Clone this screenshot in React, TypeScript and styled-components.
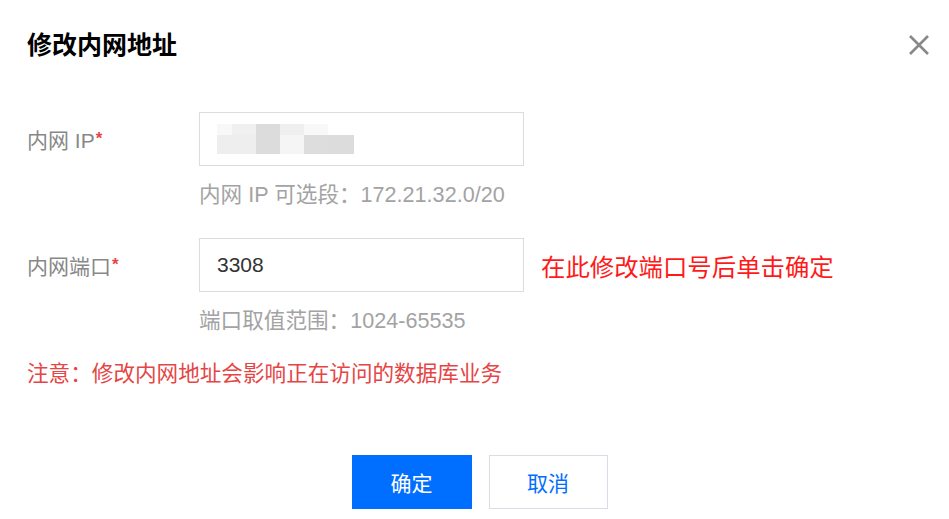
import * as React from "react"
import styled, { createGlobalStyle } from "styled-components"

const GlobalStyle = createGlobalStyle`
    html, body {
        margin: 0;
        padding: 0;
        background: #fff;
    }
    body {
        font-family: "Liberation Sans", "Noto Sans CJK SC", sans-serif;
    }
`

const Dialog = styled.div`
    width: 949px;
    height: 519px;
    box-sizing: border-box;
    padding: 27px 17px 0 27px;
    background: #fff;
    overflow: hidden;
`

const Header = styled.div`
    display: flex;
    justify-content: space-between;
    align-items: center;
    height: 36px;
`

const Title = styled.h2`
    margin: 0;
    font-size: 25px;
    font-weight: 700;
    color: #000;
    line-height: 36px;
`

const CloseButton = styled.button`
    width: 26px;
    height: 26px;
    padding: 0;
    border: none;
    background: none;
    display: flex;
    align-items: center;
    justify-content: center;
    cursor: pointer;
`

const Form = styled.div`
    margin-top: 49px;
    display: flex;
    flex-direction: column;
`

const Row = styled.div<{ gap?: number }>`
    display: grid;
    grid-template-columns: 172px 325px 1fr;
    margin-top: ${p => p.gap ?? 0}px;
`

const Label = styled.div`
    height: 54px;
    display: flex;
    align-items: center;
    font-size: 21px;
    color: #888;
`

const Star = styled.span`
    color: #e54545;
    font-size: 17px;
    font-weight: 700;
    align-self: flex-start;
    margin-top: 17px;
    margin-left: 1px;
`

const Field = styled.div`
    display: flex;
    flex-direction: column;
`

const InputBox = styled.div`
    height: 54px;
    box-sizing: border-box;
    border: 1px solid #dcdcdc;
    display: flex;
    align-items: center;
    padding: 0 17px;
    font-size: 21px;
    color: #333;
`

const Help = styled.div`
    margin-top: 17px;
    line-height: 24px;
    font-size: 21.6px;
    color: #a3a3a3;
    white-space: nowrap;
`

const Annotation = styled.div`
    height: 54px;
    display: flex;
    align-items: center;
    padding-left: 17px;
    font-size: 24.4px;
    color: #ff1a1a;
    white-space: nowrap;
`

const Warning = styled.div`
    margin-top: 29px;
    line-height: 24px;
    font-size: 21.6px;
    color: #e54545;
`

const Footer = styled.div`
    margin-top: 69px;
    display: flex;
    justify-content: center;
    gap: 17px;
`

const Button = styled.button<{ primary?: boolean }>`
    width: ${p => p.primary ? 120 : 119}px;
    height: 54px;
    box-sizing: border-box;
    font-family: inherit;
    font-size: 21px;
    border: 1px solid ${p => p.primary ? "#006eff" : "#d8dde6"};
    background: ${p => p.primary ? "#006eff" : "#fff"};
    color: ${p => p.primary ? "#fff" : "#006eff"};
    cursor: pointer;
`

// pixelated mosaic hiding the ip value
const Mosaic = () => (
    <svg width="140" height="30" viewBox="0 0 140 30">
        <rect x="0" y="0" width="15" height="11" fill="#f8f8f8" />
        <rect x="15" y="0" width="24" height="11" fill="#f0f0f0" />
        <rect x="39" y="0" width="24" height="11" fill="#dcdcdc" />
        <rect x="63" y="0" width="24" height="11" fill="#efefef" />
        <rect x="87" y="0" width="24" height="11" fill="#f8f8f8" />
        <rect x="0" y="11" width="39" height="19" fill="#eeeeee" />
        <rect x="39" y="11" width="24" height="19" fill="#dcdcdc" />
        <rect x="63" y="11" width="24" height="19" fill="#f5f5f5" />
        <rect x="87" y="11" width="24" height="19" fill="#dddddd" />
        <rect x="111" y="11" width="26" height="19" fill="#dcdcdc" />
    </svg>
)

const App = (): JSX.Element => {
    const [port] = React.useState("3308")
    return (
        <Dialog>
            <GlobalStyle />
            <Header>
                <Title>修改内网地址</Title>
                <CloseButton aria-label="关闭">
                    <svg width="22" height="22" viewBox="0 0 22 22">
                        <path d="M2 2 L20 20 M20 2 L2 20" stroke="#888" strokeWidth="2.6" />
                    </svg>
                </CloseButton>
            </Header>
            <Form>
                <Row>
                    <Label>内网 IP<Star>*</Star></Label>
                    <Field>
                        <InputBox><Mosaic /></InputBox>
                        <Help>内网 IP 可选段：172.21.32.0/20</Help>
                    </Field>
                </Row>
                <Row gap={31}>
                    <Label>内网端口<Star>*</Star></Label>
                    <Field>
                        <InputBox>{port}</InputBox>
                        <Help>端口取值范围：1024-65535</Help>
                    </Field>
                    <Annotation>在此修改端口号后单击确定</Annotation>
                </Row>
                <Warning>注意：修改内网地址会影响正在访问的数据库业务</Warning>
            </Form>
            <Footer>
                <Button primary>确定</Button>
                <Button>取消</Button>
            </Footer>
        </Dialog>
    )
}

export default App
